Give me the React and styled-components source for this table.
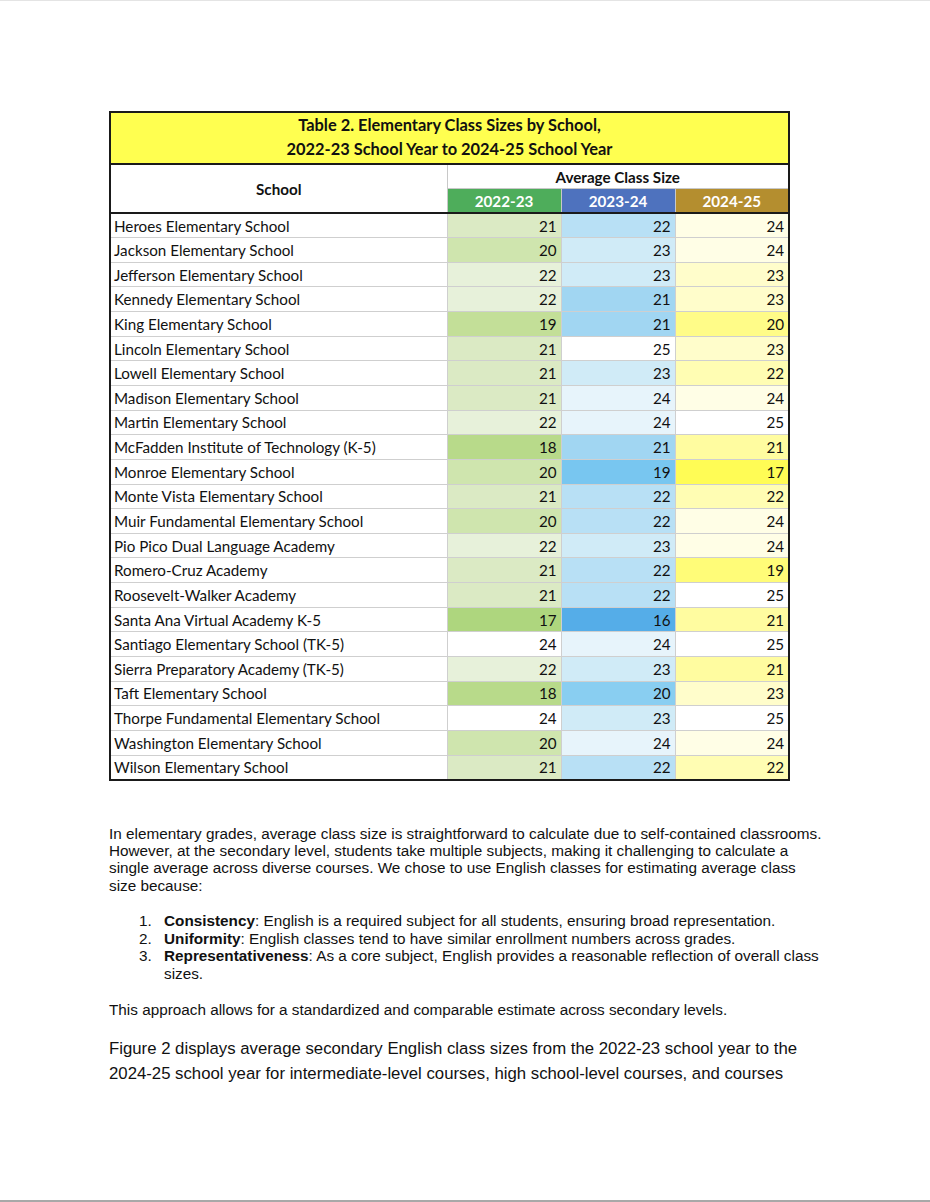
import React from 'react'
import styled, { createGlobalStyle } from 'styled-components'

const Global = createGlobalStyle`
  html, body {
    margin: 0;
    padding: 0;
    background: #fff;
  }
`

const rows = [
  ['Heroes Elementary School', 21, 22, 24],
  ['Jackson Elementary School', 20, 23, 24],
  ['Jefferson Elementary School', 22, 23, 23],
  ['Kennedy Elementary School', 22, 21, 23],
  ['King Elementary School', 19, 21, 20],
  ['Lincoln Elementary School', 21, 25, 23],
  ['Lowell Elementary School', 21, 23, 22],
  ['Madison Elementary School', 21, 24, 24],
  ['Martin Elementary School', 22, 24, 25],
  ['McFadden Institute of Technology (K-5)', 18, 21, 21],
  ['Monroe Elementary School', 20, 19, 17],
  ['Monte Vista Elementary School', 21, 22, 22],
  ['Muir Fundamental Elementary School', 20, 22, 24],
  ['Pio Pico Dual Language Academy', 22, 23, 24],
  ['Romero-Cruz Academy', 21, 22, 19],
  ['Roosevelt-Walker Academy', 21, 22, 25],
  ['Santa Ana Virtual Academy K-5', 17, 16, 21],
  ['Santiago Elementary School (TK-5)', 24, 24, 25],
  ['Sierra Preparatory Academy (TK-5)', 22, 23, 21],
  ['Taft Elementary School', 18, 20, 23],
  ['Thorpe Fundamental Elementary School', 24, 23, 25],
  ['Washington Elementary School', 20, 24, 24],
  ['Wilson Elementary School', 21, 22, 22],
]

// colour scales per year column, as in the spreadsheet
const scales = [
  { 17: '#AED67E', 18: '#B8DA8A', 19: '#C3DF98', 20: '#CFE5AE', 21: '#DBEAC4', 22: '#E7F1DA', 23: '#F3F8ED', 24: '#FFFFFF' },
  { 16: '#55ADE8', 19: '#78C6F0', 20: '#89CEF1', 21: '#A1D6F2', 22: '#B8E0F5', 23: '#D0EBF7', 24: '#E7F4FB', 25: '#FFFFFF' },
  { 17: '#FFFC55', 19: '#FFFC78', 20: '#FFFC88', 21: '#FFFCA0', 22: '#FFFDB3', 23: '#FFFDCB', 24: '#FFFEE6', 25: '#FFFFFF' },
]

const years = [
  { label: '2022-23', color: '#4EAD5B' },
  { label: '2023-24', color: '#4E72BE' },
  { label: '2024-25', color: '#B48E2F' },
]

export default function App() {
  return (
    <Page>
      <Global />
      <Table>
        <colgroup>
          <col style={{ width: 337 }} />
          <col style={{ width: 114 }} />
          <col style={{ width: 114 }} />
          <col style={{ width: 114 }} />
        </colgroup>
        <thead>
          <tr>
            <Title colSpan={4}>
              Table 2. Elementary Class Sizes by School,
              <br />
              2022-23 School Year to 2024-25 School Year
            </Title>
          </tr>
          <tr>
            <SchoolHead rowSpan={2}>School</SchoolHead>
            <GroupHead colSpan={3}>Average Class Size</GroupHead>
          </tr>
          <tr>
            {years.map((y) => (
              <YearHead key={y.label} $bg={y.color}>{y.label}</YearHead>
            ))}
          </tr>
        </thead>
        <tbody>
          {rows.map(([name, ...vals]) => (
            <Row key={name}>
              <NameCell>{name}</NameCell>
              {vals.map((v, i) => (
                <NumCell key={i} $bg={scales[i][v]}>{v}</NumCell>
              ))}
            </Row>
          ))}
        </tbody>
      </Table>

      <Text>
        <Para>
          In elementary grades, average class size is straightforward to calculate due to self-contained classrooms.
          <br />
          However, at the secondary level, students take multiple subjects, making it challenging to calculate a
          <br />
          single average across diverse courses. We chose to use English classes for estimating average class
          <br />
          size because:
        </Para>
        <List>
          <li><b>Consistency</b>: English is a required subject for all students, ensuring broad representation.</li>
          <li><b>Uniformity</b>: English classes tend to have similar enrollment numbers across grades.</li>
          <li><b>Representativeness</b>: As a core subject, English provides a reasonable reflection of overall class <br />sizes.</li>
        </List>
        <Para>This approach allows for a standardized and comparable estimate across secondary levels.</Para>
        <Lead>
          Figure 2 displays average secondary English class sizes from the 2022-23 school year to the
          <br />
          2024-25 school year for intermediate-level courses, high school-level courses, and courses
        </Lead>
      </Text>
    </Page>
  )
}

const Page = styled.div`
  box-sizing: border-box;
  width: 930px;
  height: 1202px;
  padding: 110px 0 0 109px;
  border-top: 1px solid #e4e4e4;
  border-bottom: 2px solid #a8a8a8;
  overflow: hidden;
`

const Table = styled.table`
  width: 679px;
  border-collapse: collapse;
  table-layout: fixed;
  font-family: Lato, 'Open Sans', sans-serif;
  font-size: 15.2px;
  color: #111;
  border: 2px solid #1a1a1a;

  td, th {
    padding: 0;
  }
`

const Title = styled.th`
  background: #FFFF50;
  border-bottom: 2px solid #1a1a1a;
  font-size: 16.4px;
  font-weight: 700;
  line-height: 24px;
  height: 46px;
  padding-bottom: 2px !important;
  text-align: center;
`

const SchoolHead = styled.th`
  font-weight: 700;
  text-align: center;
  border-right: 1px solid #c8c8c8;
  border-bottom: 2px solid #1a1a1a;
`

const GroupHead = styled.th`
  height: 23px;
  font-weight: 700;
  text-align: center;
  border-bottom: 1px solid #c8c8c8;
`

const YearHead = styled.th`
  height: 23px;
  background: ${(p) => p.$bg};
  color: #fff;
  font-weight: 700;
  text-align: center;
  border-left: 1px solid #c8c8c8;
  border-bottom: 2px solid #1a1a1a;
`

const Row = styled.tr`
  height: 24.65px;
`

const NameCell = styled.td`
  padding-left: 3px !important;
  border-bottom: 1px solid #cfcfcf;
  border-right: 1px solid #cfcfcf;
  white-space: nowrap;
`

const NumCell = styled.td`
  background: ${(p) => p.$bg};
  text-align: right;
  padding-right: 4px !important;
  border-bottom: 1px solid #cfcfcf;
  border-left: 1px solid #cfcfcf;
`

const Text = styled.div`
  width: 760px;
  margin-top: 44px;
  font-family: 'Liberation Sans', Arial, sans-serif;
  color: #111;
  white-space: nowrap;
`

const Para = styled.p`
  margin: 0 0 18px;
  font-size: 15.3px;
  line-height: 17.3px;
`

const List = styled.ol`
  margin: 0 0 18px;
  padding-left: 47px;
  font-size: 15.3px;
  line-height: 17.7px;

  li {
    padding-left: 8px;
  }
`

const Lead = styled.p`
  margin: 4px 0 0;
  font-size: 16.75px;
  line-height: 25px;
`
